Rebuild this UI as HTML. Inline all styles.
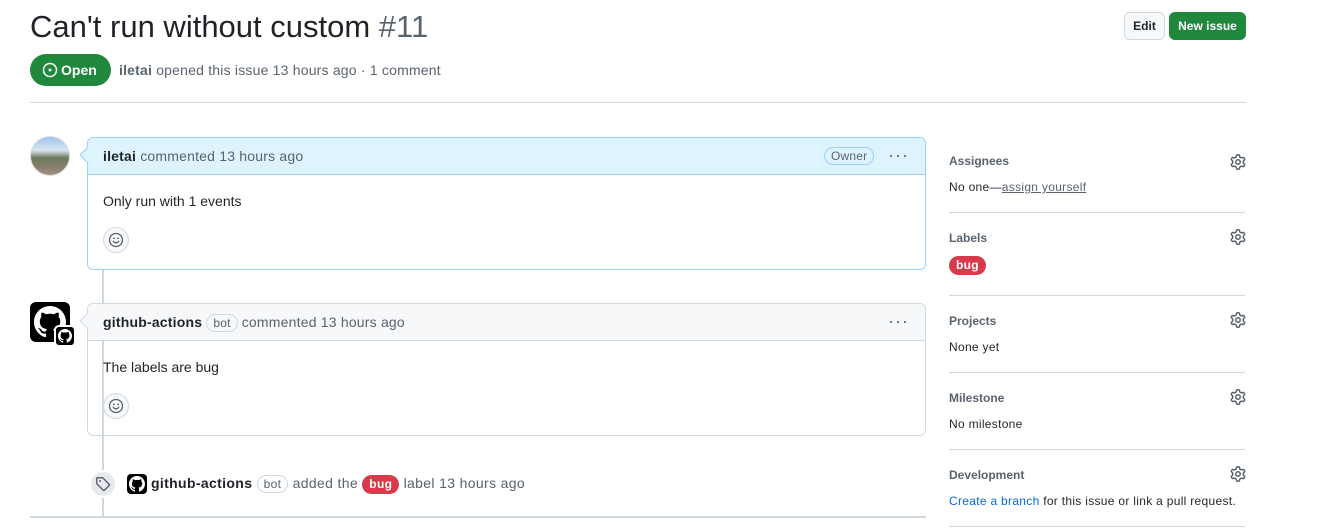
<!DOCTYPE html>
<html><head><meta charset="utf-8">
<style>
*{box-sizing:border-box;margin:0;padding:0}
body{width:1329px;height:530px;overflow:hidden;background:#fff;font-family:"Liberation Sans",Arial,sans-serif;color:#1f2328;position:relative}
.a{position:absolute}
.muted{color:#59636e}
.gear{position:absolute;width:16px;height:16px}
.side h3{font-size:12px;font-weight:bold;color:#59636e;position:absolute;left:949px}
.side .v{font-size:12px;position:absolute;left:949px;letter-spacing:.3px}
.sep{position:absolute;left:949px;width:296px;height:1px;background:#d1d9e0}
.pill{display:inline-block;border:1px solid #d1d9e0;border-radius:10px;font-size:12px;color:#59636e;padding:1px 6px;line-height:14px}
.bug{display:inline-block;background:#d73a4a;color:#fff;font-weight:bold;font-size:12px;border-radius:10px;padding:2px 7px;line-height:15px}
.hd{letter-spacing:.2px}
.dots{position:absolute;left:800px;top:-1px;font-size:18px;color:#59636e;letter-spacing:1px}
</style></head><body>
<svg width="0" height="0" style="position:absolute"><symbol id="g" viewBox="0 0 16 16"><path d="M8 0a8.2 8.2 0 01.701.031C9.444.095 9.99.645 10.16 1.29l.288 1.107c.018.066.079.158.212.224.231.114.454.243.668.386.123.082.233.09.299.071l1.103-.303c.644-.176 1.392.021 1.82.63.27.385.506.792.704 1.218.315.675.111 1.422-.364 1.891l-.814.806c-.049.048-.098.147-.088.294.016.257.016.515 0 .772-.01.147.038.246.088.294l.814.806c.475.469.679 1.216.364 1.891a7.977 7.977 0 01-.704 1.217c-.428.61-1.176.807-1.820.63l-1.102-.302c-.067-.019-.177-.011-.3.071a5.909 5.909 0 01-.668.386c-.133.066-.194.158-.211.224l-.29 1.106c-.168.646-.715 1.196-1.458 1.26a8.006 8.006 0 01-1.402 0c-.743-.064-1.289-.614-1.458-1.26l-.289-1.106c-.018-.066-.079-.158-.212-.224a5.738 5.738 0 01-.668-.386c-.123-.082-.233-.09-.299-.071l-1.103.303c-.644.176-1.392-.021-1.82-.63a8.12 8.12 0 01-.704-1.218c-.315-.675-.111-1.422.363-1.891l.815-.806c.05-.048.098-.147.088-.294a6.214 6.214 0 010-.772c.01-.147-.038-.246-.088-.294l-.815-.806C.635 6.045.431 5.298.746 4.623a7.92 7.92 0 01.704-1.217c.428-.61 1.176-.807 1.82-.63l1.102.302c.067.019.177.011.3-.071.214-.143.437-.272.668-.386.133-.066.194-.158.211-.224l.29-1.106C6.009.645 6.556.095 7.299.03 7.53.01 7.764 0 8 0zm-.571 1.525c-.036.003-.108.036-.137.146l-.289 1.105c-.147.561-.549.967-.998 1.189-.173.086-.34.183-.5.29-.417.278-.97.423-1.529.27l-1.103-.303c-.109-.03-.175.016-.195.045-.22.312-.412.644-.573.99-.014.031-.021.11.059.19l.815.806c.411.406.562.957.53 1.456a4.709 4.709 0 000 .582c.032.499-.119 1.05-.53 1.456l-.815.806c-.081.08-.073.159-.059.19.162.346.353.677.573.989.02.03.085.076.195.046l1.102-.303c.56-.153 1.113-.008 1.53.27.161.107.328.204.501.29.447.222.85.629.997 1.189l.289 1.105c.029.109.101.143.137.146a6.6 6.6 0 001.142 0c.036-.003.108-.036.137-.146l.289-1.105c.147-.561.549-.967.998-1.189.173-.086.34-.183.5-.29.417-.278.97-.423 1.529-.27l1.103.303c.109.029.175-.016.195-.045.22-.313.411-.644.573-.99.014-.031.021-.11-.059-.19l-.815-.806c-.411-.406-.562-.957-.53-1.456a4.709 4.709 0 000-.582c-.032-.499.119-1.05.53-1.456l.815-.806c.081-.08.073-.159.059-.19a6.464 6.464 0 00-.573-.989c-.02-.03-.085-.076-.195-.046l-1.102.303c-.56.153-1.113.008-1.53-.27a4.440 4.440 0 00-.501-.29c-.447-.222-.85-.629-.997-1.189l-.289-1.105c-.029-.11-.101-.143-.137-.146a6.6 6.6 0 00-1.142 0zM11 8a3 3 0 11-6 0 3 3 0 016 0zM9.5 8a1.5 1.5 0 10-3.001.001A1.5 1.5 0 009.5 8z" fill="#59636e"/></symbol></svg>

<div class="a" style="left:30px;top:7px;font-size:31px;line-height:40px;color:#1f2328">Can't run without custom <span style="color:#59636e">#11</span></div>

<div class="a" style="left:1124px;top:12px;width:41px;height:28px;border:1px solid #d1d9e0;background:#f6f8fa;border-radius:6px;font-size:12px;font-weight:bold;text-align:center;line-height:26px">Edit</div>
<div class="a" style="left:1169px;top:12px;width:77px;height:28px;background:#1f883d;border-radius:6px;font-size:12px;font-weight:bold;color:#fff;text-align:center;line-height:28px">New issue</div>

<div class="a" style="left:30px;top:54px;width:81px;height:32px;background:#1f883d;border-radius:16px;color:#fff;font-size:14px;font-weight:bold;line-height:32px;padding-left:12px">
<svg width="16" height="16" viewBox="0 0 16 16" style="vertical-align:-3px;margin-right:3px"><circle cx="8" cy="8" r="6.5" fill="none" stroke="#fff" stroke-width="1.5"/><circle cx="8" cy="8" r="1.5" fill="#fff"/></svg>Open</div>
<div class="a muted hd" style="left:119px;top:62px;font-size:14px"><b style="color:#59636e">iletai</b> opened this issue 13 hours ago · 1 comment</div>

<div class="a" style="left:30px;top:102px;width:1216px;height:1px;background:#d1d9e0"></div>

<div class="a" style="left:102px;top:269px;width:2px;height:248px;background:#d1d9e0"></div>

<div class="a" style="left:30px;top:136px;width:40px;height:40px;border-radius:50%;background:linear-gradient(#9fc4e8 0%,#d8e6f0 35%,#6b7a5a 55%,#8a8070 80%,#a09080 100%);border:1px solid #ddd"></div>

<div class="a" style="left:87px;top:137px;width:839px;height:133px;border:1px solid #9cd0fb;border-radius:6px;overflow:hidden">
 <div class="hd" style="height:37px;background:#ddf4ff;border-bottom:1px solid #9cd0fb;font-size:14px;line-height:36px;padding-left:15px"><b>iletai</b> <span class="muted">commented 13 hours ago</span>
 <span class="pill" style="position:absolute;left:736px;top:9px;color:#59636e;border-color:#9cd0fb">Owner</span>
 <span class="dots">···</span></div>
 <div style="padding:18px 15px 0;font-size:14px">Only run with 1 events</div>
</div>
<svg class="a" style="left:80px;top:147px" width="8" height="16"><path d="M8 0 L0 8 L8 16" fill="#ddf4ff" stroke="#9cd0fb"/></svg>
<div class="a" style="left:103px;top:227px;width:26px;height:26px;border-radius:50%;background:#f6f8fa;border:1px solid #d1d9e0"></div>
<svg class="a" style="left:108px;top:232px" width="16" height="16" viewBox="0 0 16 16"><circle cx="8" cy="8" r="6.5" fill="none" stroke="#59636e" stroke-width="1.3"/><path d="M5.3 9.3c.6 1 1.6 1.5 2.7 1.5s2.1-.5 2.7-1.5" fill="none" stroke="#59636e" stroke-width="1.3" stroke-linecap="round"/><circle cx="6" cy="6.3" r=".9" fill="#59636e"/><circle cx="10" cy="6.3" r=".9" fill="#59636e"/></svg>

<div class="a" style="left:30px;top:302px;width:40px;height:40px;border-radius:6px;background:#000"></div>
<svg class="a" style="left:34px;top:306px" width="32" height="32" viewBox="0 0 16 16"><path fill="#fff" d="M8 0C3.58 0 0 3.58 0 8c0 3.54 2.29 6.53 5.47 7.59.4.07.55-.17.55-.38 0-.19-.01-.82-.01-1.49-2.01.37-2.53-.49-2.69-.94-.09-.23-.48-.94-.82-1.130-.28-.15-.68-.52-.01-.53.63-.01 1.08.58 1.23.82.72 1.21 1.87.87 2.33.66.07-.52.28-.87.51-1.07-1.78-.2-3.64-.89-3.64-3.95 0-.87.31-1.59.82-2.15-.08-.2-.36-1.02.08-2.12 0 0 .67-.21 2.2.82.64-.18 1.32-.27 2-.27.68 0 1.36.09 2 .27 1.53-1.04 2.2-.82 2.2-.82.44 1.1.16 1.92.08 2.12.51.56.82 1.27.82 2.15 0 3.07-1.87 3.75-3.65 3.95.29.25.54.73.54 1.48 0 1.07-.01 1.93-.01 2.2 0 .21.15.46.55.38A8.013 8.013 0 0016 8c0-4.42-3.58-8-8-8z"/></svg>
<div class="a" style="left:54px;top:325px;width:22px;height:22px;border-radius:5px;background:#000;border:2px solid #fff"></div>
<svg class="a" style="left:58px;top:329px" width="14" height="14" viewBox="0 0 16 16"><path fill="#fff" d="M8 0C3.58 0 0 3.58 0 8c0 3.54 2.29 6.53 5.47 7.59.4.07.55-.17.55-.38v-1.49c-2.01.37-2.53-.49-2.69-.94-.09-.23-.48-.94-.82-1.13-.28-.15-.68-.52-.01-.53.63-.01 1.08.58 1.23.82.72 1.21 1.87.87 2.33.66.07-.52.28-.87.51-1.07-1.78-.2-3.64-.89-3.64-3.95 0-.87.31-1.59.82-2.15-.08-.2-.36-1.02.08-2.12 0 0 .67-.21 2.2.82a7.5 7.5 0 014 0c1.53-1.04 2.2-.82 2.2-.82.44 1.1.16 1.92.08 2.12.51.56.82 1.27.82 2.15 0 3.07-1.870 3.75-3.65 3.95.29.25.54.73.54 1.48v2.2c0 .21.15.46.55.38A8.013 8.013 0 0016 8c0-4.42-3.58-8-8-8z"/></svg>

<div class="a" style="left:87px;top:303px;width:839px;height:133px;border:1px solid #d1d9e0;border-radius:6px;overflow:hidden">
 <div class="hd" style="height:37px;background:#f6f8fa;border-bottom:1px solid #d1d9e0;font-size:14px;line-height:36px;padding-left:15px"><b>github-actions</b> <span class="pill">bot</span> <span class="muted">commented 13 hours ago</span>
 <span class="dots">···</span></div>
 <div style="padding:18px 15px 0;font-size:14px">The labels are bug</div>
</div>
<svg class="a" style="left:80px;top:313px" width="8" height="16"><path d="M8 0 L0 8 L8 16" fill="#f6f8fa" stroke="#d1d9e0"/></svg>
<div class="a" style="left:103px;top:393px;width:26px;height:26px;border-radius:50%;background:#f6f8fa;border:1px solid #d1d9e0"></div>
<svg class="a" style="left:108px;top:398px" width="16" height="16" viewBox="0 0 16 16"><circle cx="8" cy="8" r="6.5" fill="none" stroke="#59636e" stroke-width="1.3"/><path d="M5.3 9.3c.6 1 1.6 1.5 2.7 1.5s2.1-.5 2.7-1.5" fill="none" stroke="#59636e" stroke-width="1.3" stroke-linecap="round"/><circle cx="6" cy="6.3" r=".9" fill="#59636e"/><circle cx="10" cy="6.3" r=".9" fill="#59636e"/></svg>

<div class="a" style="left:89px;top:470px;width:28px;height:28px;border-radius:50%;background:#e6eaef;border:2px solid #fff"></div>
<svg class="a" style="left:95px;top:476px" width="16" height="16" viewBox="0 0 16 16"><path d="M1.75 2.5v5.2l6.6 6.55a.75.75 0 001.05 0l4.85-4.85a.75.75 0 000-1.05L7.7 1.75H2.5a.75.75 0 00-.75.75z" fill="none" stroke="#59636e" stroke-width="1.4" stroke-linejoin="round"/><circle cx="5" cy="5" r="1" fill="#59636e"/></svg>
<div class="a" style="left:127px;top:474px;width:20px;height:20px;border-radius:4px;background:#000"></div>
<svg class="a" style="left:129px;top:476px" width="16" height="16" viewBox="0 0 16 16"><path fill="#fff" d="M8 0C3.58 0 0 3.58 0 8c0 3.54 2.29 6.53 5.47 7.59.4.07.55-.17.55-.38v-1.49c-2.01.37-2.53-.49-2.69-.94-.09-.23-.48-.94-.82-1.13-.28-.15-.68-.52-.01-.53.63-.01 1.08.58 1.23.82.72 1.21 1.87.87 2.33.66.07-.52.28-.87.51-1.07-1.78-.2-3.64-.89-3.64-3.95 0-.87.31-1.59.82-2.15-.08-.2-.36-1.02.08-2.12 0 0 .67-.21 2.2.82a7.5 7.5 0 014 0c1.53-1.04 2.2-.82 2.2-.82.44 1.1.16 1.92.08 2.12.51.56.82 1.27.82 2.15 0 3.07-1.87 3.75-3.65 3.95.29.25.54.73.54 1.48v2.2c0 .21.15.46.55.38A8.013 8.013 0 0016 8c0-4.42-3.58-8-8-8z"/></svg>
<div class="a" style="left:151px;top:474px;font-size:14px;line-height:18px;white-space:nowrap;letter-spacing:.35px"><b>github-actions</b> <span class="pill">bot</span> <span class="muted">added the</span> <span class="bug">bug</span> <span class="muted">label 13 hours ago</span></div>

<div class="a" style="left:30px;top:516px;width:896px;height:2px;background:#d1d9e0"></div>

<div class="side">
<h3 style="top:154px">Assignees</h3>
<div class="v" style="top:180px">No one—<span style="color:#59636e;text-decoration:underline">assign yourself</span></div>
<div class="sep" style="top:212px"></div>
<h3 style="top:231px">Labels</h3>
<div class="v" style="top:256px"><span class="bug">bug</span></div>
<div class="sep" style="top:295px"></div>
<h3 style="top:314px">Projects</h3>
<div class="v" style="top:340px">None yet</div>
<div class="sep" style="top:372px"></div>
<h3 style="top:391px">Milestone</h3>
<div class="v" style="top:417px">No milestone</div>
<div class="sep" style="top:449px"></div>
<h3 style="top:468px">Development</h3>
<div class="v" style="top:494px"><span style="color:#0969da">Create a branch</span> for this issue or link a pull request.</div>
<div class="sep" style="top:526px"></div>
</div>
<svg class="gear" style="left:1230px;top:154px"><use href="#g"/></svg>
<svg class="gear" style="left:1230px;top:229px"><use href="#g"/></svg>
<svg class="gear" style="left:1230px;top:312px"><use href="#g"/></svg>
<svg class="gear" style="left:1230px;top:389px"><use href="#g"/></svg>
<svg class="gear" style="left:1230px;top:466px"><use href="#g"/></svg>
</body></html>
